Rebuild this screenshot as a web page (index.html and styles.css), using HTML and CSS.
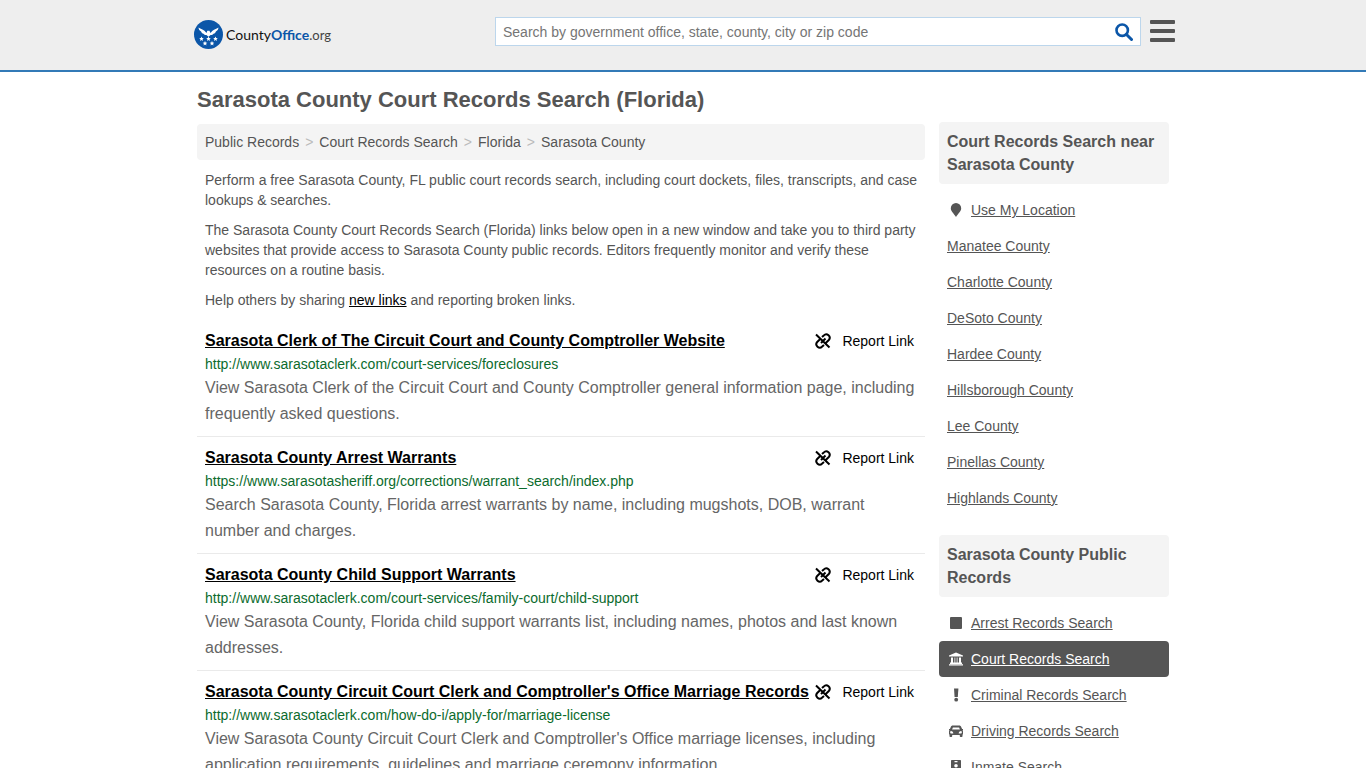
FILE: index.html
```html
<!DOCTYPE html>
<html lang="en">
<head>
    <meta charset="UTF-8">
    <meta name="viewport" content="width=device-width, initial-scale=1.0">
    <title>Sarasota County Court Records Search (Florida)</title>
    <link rel="stylesheet" href="styles.css">
</head>
<body>
    <!-- shared icon -->
    <svg class="sprite" aria-hidden="true">
        <symbol id="unlink" viewBox="0 0 16 16">
            <path d="M1 1.5 14.5 14.5M7 4 8.800 2.400A3.400 3.400 0 0 1 13.800 7L11 9.800M9 12 7.200 13.600A3.400 3.400 0 0 1 2.200 9L5 6.200M6 10 10.500 5.500" fill="none" stroke="currentColor" stroke-width="2"/>
        </symbol>
    </svg>

    <header class="header">
        <div class="header-inner">
            <a class="logo" href="#">
                <svg class="logo-mark" viewBox="0 0 29 29" aria-hidden="true">
                    <circle cx="14.500" cy="14.500" r="14.500" fill="#0b56a8"/>
                    <g fill="#fff">
                        <path d="M4.500 7.500c1.500 1.300 4 1.600 6 3.300l2 2.200.8-2.200h2.200l.9 2.200 2.100-2.200c2-1.700 4.500-2 6-3.300-.1 2-1.200 3.300-2.600 4-.3 1.200-1.200 2-2.400 2.300-.6.900-1.700 1.300-2.900 1.200l-2.100 1.700-2.100-1.700c-1.200.1-2.300-.3-2.900-1.200-1.200-.3-2.100-1.100-2.400-2.300-1.400-.7-2.500-2-2.600-4z"/>
                        <path id="star" d="M7.500 16.500l.7 1.500 1.600.2-1.200 1.100.3 1.600-1.400-.8-1.400.8.300-1.600-1.200-1.100 1.600-.2z"/>
                        <use href="#star" x="7"/>
                        <use href="#star" x="14"/>
                        <use href="#star" x="3.500" y="4.500"/>
                        <use href="#star" x="10.500" y="4.500"/>
                    </g>
                </svg>
                <span class="logo-text">County<b>Office</b><small>.org</small></span>
            </a>
            <form class="search">
                <input type="text" class="search-input" aria-label="Search" placeholder="Search by government office, state, county, city or zip code">
                <button type="button" class="search-button" aria-label="Submit search">
                    <svg viewBox="0 0 18 18" width="18" height="18"><circle cx="7.200" cy="7.200" r="5.700" fill="none" stroke="currentColor" stroke-width="2.600"/><path d="M11.500 11.500l5 5" stroke="currentColor" stroke-width="3" stroke-linecap="round"/></svg>
                </button>
            </form>
            <button type="button" class="menu-button" aria-label="Menu">
                <span></span><span></span><span></span>
            </button>
        </div>
    </header>

    <div class="container">
        <main class="main">
            <h1>Sarasota County Court Records Search (Florida)</h1>
            <nav class="breadcrumb">
                <a href="#">Public Records</a><i>&gt;</i><a href="#">Court Records Search</a><i>&gt;</i><a href="#">Florida</a><i>&gt;</i><a href="#">Sarasota County</a>
            </nav>
            <div class="intro">
                <p>Perform a free Sarasota County, FL public court records search, including court dockets, files, transcripts, and case lookups &amp; searches.</p>
                <p>The Sarasota County Court Records Search (Florida) links below open in a new window and take you to third party websites that provide access to Sarasota County public records. Editors frequently monitor and verify these resources on a routine basis.</p>
                <p>Help others by sharing <a href="#">new links</a> and reporting broken links.</p>
            </div>

            <article class="result">
                <div class="result-head">
                    <h2><a href="#">Sarasota Clerk of The Circuit Court and County Comptroller Website</a></h2>
                    <a class="report" href="#"><svg width="16" height="16"><use href="#unlink"/></svg>Report Link</a>
                </div>
                <div class="url">http://www.sarasotaclerk.com/court-services/foreclosures</div>
                <p class="description">View Sarasota Clerk of the Circuit Court and County Comptroller general information page, including frequently asked questions.</p>
            </article>
            <article class="result">
                <div class="result-head">
                    <h2><a href="#">Sarasota County Arrest Warrants</a></h2>
                    <a class="report" href="#"><svg width="16" height="16"><use href="#unlink"/></svg>Report Link</a>
                </div>
                <div class="url">https://www.sarasotasheriff.org/corrections/warrant_search/index.php</div>
                <p class="description">Search Sarasota County, Florida arrest warrants by name, including mugshots, DOB, warrant number and charges.</p>
            </article>
            <article class="result">
                <div class="result-head">
                    <h2><a href="#">Sarasota County Child Support Warrants</a></h2>
                    <a class="report" href="#"><svg width="16" height="16"><use href="#unlink"/></svg>Report Link</a>
                </div>
                <div class="url">http://www.sarasotaclerk.com/court-services/family-court/child-support</div>
                <p class="description">View Sarasota County, Florida child support warrants list, including names, photos and last known addresses.</p>
            </article>
            <article class="result">
                <div class="result-head">
                    <h2><a href="#">Sarasota County Circuit Court Clerk and Comptroller's Office Marriage Records</a></h2>
                    <a class="report" href="#"><svg width="16" height="16"><use href="#unlink"/></svg>Report Link</a>
                </div>
                <div class="url">http://www.sarasotaclerk.com/how-do-i/apply-for/marriage-license</div>
                <p class="description">View Sarasota County Circuit Court Clerk and Comptroller's Office marriage licenses, including application requirements, guidelines and marriage ceremony information.</p>
            </article>
        </main>

        <aside class="sidebar">
            <section class="box">
                <h3>Court Records Search near Sarasota County</h3>
                <ul>
                    <li><a href="#"><svg viewBox="0 0 18 16"><path d="M9 1a5.200 5.200 0 0 0-5.200 5.200C3.800 9.500 7 11.500 9 15c2-3.500 5.200-5.500 5.200-8.800A5.200 5.200 0 0 0 9 1z"/></svg><span>Use My Location</span></a></li>
                    <li><a href="#"><span>Manatee County</span></a></li>
                    <li><a href="#"><span>Charlotte County</span></a></li>
                    <li><a href="#"><span>DeSoto County</span></a></li>
                    <li><a href="#"><span>Hardee County</span></a></li>
                    <li><a href="#"><span>Hillsborough County</span></a></li>
                    <li><a href="#"><span>Lee County</span></a></li>
                    <li><a href="#"><span>Pinellas County</span></a></li>
                    <li><a href="#"><span>Highlands County</span></a></li>
                </ul>
            </section>
            <section class="box">
                <h3>Sarasota County Public Records</h3>
                <ul>
                    <li><a href="#"><svg viewBox="0 0 18 16"><rect x="3" y="2" width="12" height="12" rx="1"/></svg><span>Arrest Records Search</span></a></li>
                    <li><a href="#" class="active"><svg viewBox="0 0 18 16"><path d="M9 1.500l7 3v1H2v-1zM4 6.500h2v5h1.500v-5h3v5H12v-5h2v5h1V13H3v-1.500h1zM8.300 6.500v5h1.400v-5zM2 13.200h14v1.300H2z" fill-rule="evenodd"/></svg><span>Court Records Search</span></a></li>
                    <li><a href="#"><svg viewBox="0 0 18 16"><path d="M7 1.500h4.400l-.6 8.500H7.600z"/><circle cx="9.200" cy="12.700" r="1.900"/></svg><span>Criminal Records Search</span></a></li>
                    <li><a href="#"><svg viewBox="0 0 18 16"><path d="M5.800 2.500h6.400c1 0 1.700.6 2 1.400l.9 2.100H16v1l-.5.200c.4.400.5.800.5 1.300v2.200c0 .4-.2.800-.5 1v1.600c0 .4-.3.700-.7.700h-1.300a.7.700 0 0 1-.7-.7V12H5.200v1.300c0 .4-.3.700-.7.700H3.200a.7.700 0 0 1-.7-.7v-1.600c-.3-.2-.5-.6-.5-1V8.500c0-.5.100-.9.500-1.300L2 7V6h.9l.9-2.100c.3-.8 1-1.400 2-1.400zM5.900 4.400l-.8 2.100h7.800l-.8-2.100zM4.700 8.200a1.200 1.200 0 1 0 0 2.300h1.600C6.300 9.200 5.700 8.400 4.700 8.200zM13.300 8.200c-1 .2-1.600 1-1.600 2.300h1.600a1.200 1.200 0 1 0 0-2.300z" fill-rule="evenodd"/></svg><span>Driving Records Search</span></a></li>
                    <li><a href="#"><svg viewBox="0 0 18 16"><path d="M5 1h8c.6 0 1 .4 1 1v12c0 .6-.4 1-1 1H5c-.6 0-1-.4-1-1V2c0-.6.4-1 1-1zM7.500 2v1.200h3V2zM9 5a1.800 1.800 0 1 0 0 3.600A1.800 1.800 0 0 0 9 5zM6 12h6c0-1.600-1.200-2.500-3-2.500S6 10.400 6 12z" fill-rule="evenodd"/></svg><span>Inmate Search</span></a></li>
                </ul>
            </section>
        </aside>
    </div>
</body>
</html>
```

FILE: styles.css
```css
* {
    box-sizing: border-box;
}

body {
    margin: 0;
    font-family: "Liberation Sans", Arial, sans-serif;
    font-size: 14px;
    line-height: 20px;
    color: #555;
    background: #fff;
}

a {
    color: inherit;
}

h1, h2, h3, p, ul {
    margin: 0;
    padding: 0;
}

button {
    padding: 0;
    border: none;
    background: none;
    cursor: pointer;
}

.sprite {
    display: none;
}

/* Header */
.header {
    background: #eee;
    border-bottom: 2px solid #337ab7;
}

.header-inner {
    display: flex;
    align-items: flex-start;
    max-width: 984px;
    height: 70px;
    margin: 0 auto;
    padding: 17px 0 0 3px;
}

.logo {
    display: flex;
    align-items: center;
    gap: 3px;
    margin-top: 3px;
    color: #111;
    text-decoration: none;
}

.logo-mark {
    width: 29px;
    height: 29px;
}

.logo-text {
    font-family: Lato, sans-serif;
    font-size: 14px;
}

.logo-text b {
    color: #0b56a8;
}

.logo-text small {
    font-size: 13px;
    color: #444;
}

.search {
    display: flex;
    width: 646px;
    height: 29px;
    margin-left: auto;
    background: #fff;
    border: 1px solid #bcd6ec;
}

.search-input {
    flex: 1;
    min-width: 0;
    padding: 0 7px;
    border: none;
    outline: none;
    background: none;
    font: inherit;
    color: #555;
}

.search-input::placeholder {
    color: #757575;
}

.search-button {
    width: 32px;
    color: #0b56a8;
}

.search-button svg {
    display: block;
    margin: 0 auto;
}

.menu-button {
    display: flex;
    flex-direction: column;
    gap: 5px;
    width: 25px;
    margin: 3px 0 0 9px;
}

.menu-button span {
    width: 100%;
    height: 4px;
    border-radius: 1px;
    background: #555;
}

/* Columns */
.container {
    display: flex;
    gap: 14px;
    max-width: 972px;
    margin: 0 auto;
}

.main {
    flex: 1;
    min-width: 0;
}

.sidebar {
    width: 230px;
    padding-top: 50px;
}

h1 {
    padding: 14px 0 10px;
    font-size: 22px;
    line-height: 28px;
    white-space: nowrap;
}

.breadcrumb {
    padding: 8px;
    border-radius: 4px;
    background: #f4f4f4;
}

.breadcrumb a {
    text-decoration: none;
}

.breadcrumb i {
    padding: 0 6px;
    font-style: normal;
    color: #bbb;
}

.intro {
    padding: 0 8px;
}

.intro p {
    margin: 10px 0;
}

.intro a {
    color: #000;
}

/* Results */
.result {
    padding: 8px 8px 9px;
    border-bottom: 1px solid #eaeaea;
}

.result-head {
    display: flex;
    justify-content: space-between;
    line-height: 26px;
}

.result h2 {
    font-size: 16px;
    color: #000;
}

.report {
    display: flex;
    align-items: center;
    gap: 11px;
    padding-right: 3px;
    color: #000;
    text-decoration: none;
    white-space: nowrap;
}

.url {
    line-height: 21px;
    color: #0b6b2d;
}

.description {
    font-size: 16px;
    line-height: 26px;
    color: #666;
}

/* Sidebar */
.box {
    margin-bottom: 19px;
}

.box h3 {
    margin-bottom: 8px;
    padding: 8px;
    border-radius: 4px;
    background: #f4f4f4;
    font-size: 16px;
    line-height: 23px;
}

.box ul {
    list-style: none;
}

.box li a {
    display: flex;
    align-items: center;
    gap: 6px;
    padding: 8px;
    border-radius: 4px;
    text-decoration: none;
}

.box li span {
    text-decoration: underline;
}

.box li svg {
    width: 18px;
    height: 16px;
    fill: currentColor;
}

.box li .active {
    background: #555;
    color: #fff;
}
```
